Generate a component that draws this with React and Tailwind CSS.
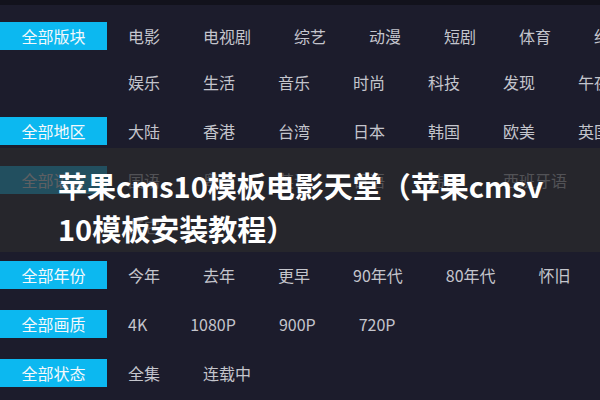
import React from "react";

const rows = [
  {
    label: "全部版块",
    items: ["电影", "电视剧", "综艺", "动漫", "短剧", "体育", "纪录", "娱乐", "生活", "音乐", "时尚", "科技", "发现", "午夜"],
  },
  { label: "全部地区", items: ["大陆", "香港", "台湾", "日本", "韩国", "欧美", "英国"] },
  { label: "全部语言", items: ["国语", "粤语", "英语", "日语", "韩语", "西班牙语", "法语", "其它"] },
  { label: "全部年份", items: ["今年", "去年", "更早", "90年代", "80年代", "怀旧"] },
  { label: "全部画质", items: ["4K", "1080P", "900P", "720P"] },
  { label: "全部状态", items: ["全集", "连载中"] },
];

const FilterRow = ({ label, items }) => (
  <div className="flex items-start">
    <div className="w-[107px] h-[28px] shrink-0 bg-[#0cb8f0] text-[#f4f8fb] text-[16px] flex items-center justify-center">
      {label}
    </div>
    <div className="ml-[21px] w-[520px] shrink-0 flex flex-wrap gap-x-[43px] gap-y-[18px]">
      {items.map((item) => (
        <span key={item} className="h-[28px] leading-[28px] text-[16px] text-[#c4c5cc] whitespace-nowrap">
          {item}
        </span>
      ))}
    </div>
  </div>
);

export default function App() {
  return (
    <div
      className="relative w-[600px] h-[400px] overflow-hidden bg-[#1c1c2c]"
      style={{ fontFamily: '"Noto Sans CJK SC", "Noto Sans", sans-serif' }}
    >
      <div className="h-[5px] bg-[#12121c]" />
      <div className="pt-[17px] flex flex-col gap-[21px]">
        {rows.map((row) => (
          <FilterRow key={row.label} {...row} />
        ))}
      </div>

      {/* title band over the list */}
      <div className="absolute left-0 right-0 top-[148px] h-[104px] bg-[rgba(42,42,44,0.74)] pl-[58px] pt-[16px]">
        <h1 className="text-[29px] leading-[43px] font-bold text-white">
          苹果cms10模板电影天堂（苹果cmsv
          <br />
          10模板安装教程）
        </h1>
      </div>
    </div>
  );
}
